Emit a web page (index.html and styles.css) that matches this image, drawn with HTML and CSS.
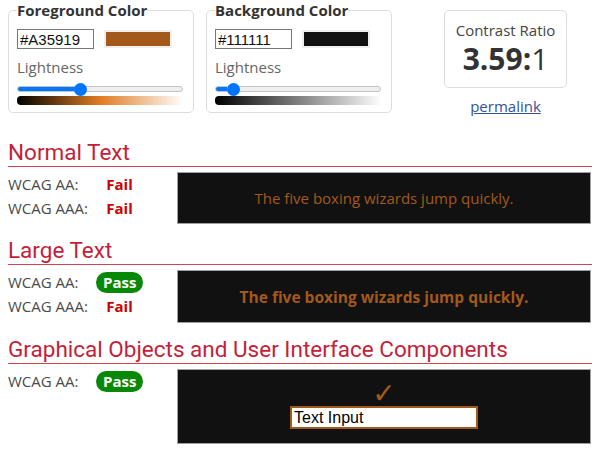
FILE: index.html
```html
<!DOCTYPE html>
<html lang="en">
<head>
<meta charset="utf-8">
<title>Contrast Checker</title>
<link rel="stylesheet" href="styles.css">
</head>
<body>
<div class="top">
  <fieldset class="picker">
    <legend>Foreground Color</legend>
    <div class="pick-row">
      <input class="hex" type="text" value="#A35919">
      <span class="swatch"><span class="swatch-fill fg-fill"></span></span>
    </div>
    <div class="light-label">Lightness</div>
    <input class="slider" type="range" min="0" max="100" value="37" style="--p:37%">
    <div class="grad grad-fg"></div>
  </fieldset>
  <fieldset class="picker">
    <legend>Background Color</legend>
    <div class="pick-row">
      <input class="hex" type="text" value="#111111">
      <span class="swatch"><span class="swatch-fill bg-fill"></span></span>
    </div>
    <div class="light-label">Lightness</div>
    <input class="slider" type="range" min="0" max="100" value="7" style="--p:7%">
    <div class="grad grad-bg"></div>
  </fieldset>
  <div class="ratio-col">
    <div class="ratio-box">
      <div class="ratio-title">Contrast Ratio</div>
      <div class="ratio-val"><b>3.59</b><b>:</b>1</div>
    </div>
    <a class="permalink" href="#">permalink</a>
  </div>
</div>

<section class="sec sec-normal">
  <h2>Normal Text</h2>
  <div class="sec-body">
    <div class="results">
      <span class="lbl">WCAG AA:</span><span class="val"><span class="fail">Fail</span></span>
      <span class="lbl">WCAG AAA:</span><span class="val"><span class="fail">Fail</span></span>
    </div>
    <div class="sample sample-normal">The five boxing wizards jump quickly.</div>
  </div>
</section>

<section class="sec sec-large">
  <h2>Large Text</h2>
  <div class="sec-body">
    <div class="results">
      <span class="lbl">WCAG AA:</span><span class="val"><span class="pass">Pass</span></span>
      <span class="lbl">WCAG AAA:</span><span class="val"><span class="fail">Fail</span></span>
    </div>
    <div class="sample sample-large">The five boxing wizards jump quickly.</div>
  </div>
</section>

<section class="sec sec-ui">
  <h2>Graphical Objects and User Interface Components</h2>
  <div class="sec-body">
    <div class="results">
      <span class="lbl">WCAG AA:</span><span class="val"><span class="pass">Pass</span></span>
    </div>
    <div class="sample sample-ui">
      <span class="check">✓</span>
      <input class="ui-input" type="text" value="Text Input">
    </div>
  </div>
</section>
</body>
</html>
```
FILE: styles.css
```css
html, body {
  margin: 0;
  padding: 0;
  background: #fff;
}
body {
  font-family: "Open Sans", "DejaVu Sans", sans-serif;
  color: #444;
  padding: 0 5px 0 8px;
}
.top {
  display: flex;
  align-items: flex-start;
  gap: 12px;
}
.picker {
  width: 186px;
  box-sizing: border-box;
  margin: 0;
  border: 1px solid #ddd;
  border-radius: 5px;
  padding: 0 9px 7px 8px;
}
.picker legend {
  font-weight: 700;
  font-size: 15px;
  line-height: 21px;
  color: #333;
  padding: 0;
}
.pick-row {
  display: flex;
  align-items: center;
  gap: 10px;
  margin-top: 8px;
}
.hex {
  width: 77px;
  height: 20px;
  box-sizing: border-box;
  margin: 0;
  padding: 0 2px;
  border: 1px solid #767676;
  font-family: "Liberation Sans", Arial, sans-serif;
  font-size: 15px;
  color: #111;
}
.swatch {
  display: block;
  width: 68px;
  height: 18px;
  box-sizing: border-box;
  padding: 2px;
  background: #efefef;
}
.swatch-fill {
  display: block;
  height: 100%;
}
.fg-fill { background: #A35919; }
.bg-fill { background: #111111; }
.light-label {
  font-size: 15px;
  line-height: 20px;
  color: #666;
  margin-top: 8px;
}
.slider {
  -webkit-appearance: none;
  appearance: none;
  display: block;
  width: 166px;
  height: 12px;
  margin: 6px 0 1px;
  background: transparent;
}
.slider::-webkit-slider-runnable-track {
  height: 6px;
  border-radius: 3px;
  border: 1px solid #c4c4c4;
  box-sizing: border-box;
  background: linear-gradient(to right, #0075ff 0, #0075ff var(--p), #efefef var(--p), #efefef 100%);
}
.slider::-webkit-slider-thumb {
  -webkit-appearance: none;
  appearance: none;
  width: 13px;
  height: 13px;
  border-radius: 50%;
  background: #0075ff;
  border: none;
  margin-top: -4.5px;
}
.grad {
  height: 9px;
  border-radius: 4px;
}
.grad-fg {
  background: linear-gradient(to right, #000, #e07d22 50%, #fff);
}
.grad-bg {
  background: linear-gradient(to right, #000, #808080 50%, #fff);
}
.ratio-col {
  margin-left: 40px;
  margin-top: 10px;
  display: flex;
  flex-direction: column;
  align-items: center;
  width: 123px;
}
.ratio-box {
  width: 123px;
  height: 78px;
  box-sizing: border-box;
  border: 1px solid #ddd;
  border-radius: 5px;
  text-align: center;
  padding-top: 9px;
}
.ratio-title {
  font-size: 15px;
  line-height: 20px;
  color: #444;
}
.ratio-val {
  font-size: 30px;
  line-height: 34px;
  color: #333;
  margin-top: 2px;
}
.ratio-val b { font-weight: 700; }
.permalink {
  margin-top: 8px;
  font-size: 15px;
  line-height: 20px;
  color: #33519a;
  text-decoration: underline;
}
.sec h2 {
  font-family: Roboto, "Open Sans", sans-serif;
  font-weight: 400;
  font-size: 22.5px;
  line-height: 26px;
  color: #c41e3a;
  margin: 0;
  border-bottom: 1px solid #d0454f;
  padding-bottom: 1px;
}
.sec-normal h2 { margin-top: 23px; }
.sec-large h2 { margin-top: 13px; }
.sec-ui h2 { margin-top: 13px; }
.sec-body {
  display: flex;
  align-items: flex-start;
  padding-top: 5px;
  padding-right: 1px;
}
.results {
  width: 169px;
  display: grid;
  grid-template-columns: 88px 47px;
  grid-auto-rows: 24px;
  align-items: center;
}
.lbl {
  font-size: 15px;
  color: #4a4a4a;
}
.val { text-align: center; }
.fail {
  font-weight: 700;
  font-size: 15px;
  color: #cc0000;
}
.pass {
  display: inline-block;
  font-weight: 700;
  font-size: 15px;
  line-height: 21px;
  color: #fff;
  background: #078807;
  border-radius: 11px;
  padding: 0 7px;
}
.sample {
  flex: 1;
  background: #111;
  border: 1px solid #a0a0a0;
  color: #A35919;
  display: flex;
  align-items: center;
  justify-content: center;
  box-sizing: border-box;
}
.sample-normal {
  height: 52px;
  font-size: 15px;
}
.sample-large {
  height: 53px;
  font-size: 15.5px;
  font-weight: 700;
}
.sample-ui {
  height: 75px;
  flex-direction: column;
  justify-content: flex-start;
  padding-top: 14px;
}
.check {
  font-family: "DejaVu Sans", sans-serif;
  font-size: 28px;
  line-height: 20px;
  height: 20px;
  color: #A35919;
}
.ui-input {
  width: 188px;
  height: 23px;
  box-sizing: border-box;
  margin: 2px 0 0;
  border: 2px solid #A35919;
  background: #fff;
  padding: 0 2px;
  font-family: "Liberation Sans", Arial, sans-serif;
  font-size: 16px;
  color: #000;
}
```
